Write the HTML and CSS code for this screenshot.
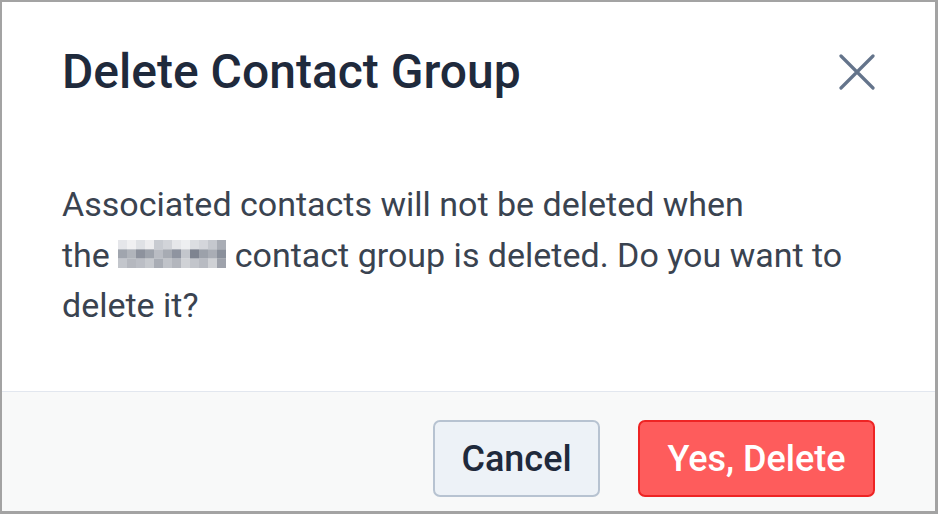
FILE: index.html
```html
<!DOCTYPE html>
<html lang="en">
<head>
<meta charset="utf-8">
<title>Delete Contact Group</title>
<link rel="stylesheet" href="styles.css">
</head>
<body>
<div class="frame">
  <div class="dialog">
    <header class="dialog-header">
      <h1 class="dialog-title">Delete Contact Group</h1>
      <button class="close-btn" aria-label="Close">
        <svg viewBox="0 0 36 36" width="36" height="36" aria-hidden="true">
          <path d="M2 2 L34 34 M34 2 L2 34" stroke="#64748b" stroke-width="3.2" stroke-linecap="round" fill="none"/>
        </svg>
      </button>
    </header>
    <div class="dialog-body">
      <p class="message">Associated contacts will not be deleted when<br>the <svg class="redacted" width="108" height="28" viewBox="0 0 108 28" aria-hidden="true">
        <g>
          <rect x="0" y="0" width="9" height="9.4" fill="#e5e6ea"/>
          <rect x="9" y="0" width="9" height="9.4" fill="#f0f0f2"/>
          <rect x="18" y="0" width="9" height="9.4" fill="#dfe1e5"/>
          <rect x="27" y="0" width="9" height="9.4" fill="#ededef"/>
          <rect x="36" y="0" width="9" height="9.4" fill="#c8cbd1"/>
          <rect x="45" y="0" width="9" height="9.4" fill="#d2d4d9"/>
          <rect x="54" y="0" width="9" height="9.4" fill="#e6e7ea"/>
          <rect x="63" y="0" width="9" height="9.4" fill="#eeeff1"/>
          <rect x="72" y="0" width="9" height="9.4" fill="#dcdee2"/>
          <rect x="81" y="0" width="9" height="9.4" fill="#d4d6db"/>
          <rect x="90" y="0" width="9" height="9.4" fill="#c5c8ce"/>
          <rect x="99" y="0" width="9" height="9.4" fill="#a9adb5"/>
          <rect x="0" y="9.3" width="9" height="9.4" fill="#a0a5ae"/>
          <rect x="9" y="9.3" width="9" height="9.4" fill="#b0b4bb"/>
          <rect x="18" y="9.3" width="9" height="9.4" fill="#8d929d"/>
          <rect x="27" y="9.3" width="9" height="9.4" fill="#9ea3ac"/>
          <rect x="36" y="9.3" width="9" height="9.4" fill="#b9bcc3"/>
          <rect x="45" y="9.3" width="9" height="9.4" fill="#a7abb3"/>
          <rect x="54" y="9.3" width="9" height="9.4" fill="#8f94a0"/>
          <rect x="63" y="9.3" width="9" height="9.4" fill="#c3c6cc"/>
          <rect x="72" y="9.3" width="9" height="9.4" fill="#7e8490"/>
          <rect x="81" y="9.3" width="9" height="9.4" fill="#9ca1aa"/>
          <rect x="90" y="9.3" width="9" height="9.4" fill="#a9adb5"/>
          <rect x="99" y="9.3" width="9" height="9.4" fill="#8a909b"/>
          <rect x="0" y="18.6" width="9" height="9.4" fill="#c3c6cc"/>
          <rect x="9" y="18.6" width="9" height="9.4" fill="#b5b8bf"/>
          <rect x="18" y="18.6" width="9" height="9.4" fill="#bbbec5"/>
          <rect x="27" y="18.6" width="9" height="9.4" fill="#c6c9ce"/>
          <rect x="36" y="18.6" width="9" height="9.4" fill="#a9adb5"/>
          <rect x="45" y="18.6" width="9" height="9.4" fill="#c0c3c9"/>
          <rect x="54" y="18.6" width="9" height="9.4" fill="#b3b6bd"/>
          <rect x="63" y="18.6" width="9" height="9.4" fill="#d0d2d6"/>
          <rect x="72" y="18.6" width="9" height="9.4" fill="#c2c5cb"/>
          <rect x="81" y="18.6" width="9" height="9.4" fill="#b8bbc2"/>
          <rect x="90" y="18.6" width="9" height="9.4" fill="#cfd1d5"/>
          <rect x="99" y="18.6" width="9" height="9.4" fill="#9ea2ab"/>
        </g>
      </svg> contact group is deleted. Do you want to<br>delete it?</p>
    </div>
    <footer class="dialog-footer">
      <button class="btn btn-secondary">Cancel</button>
      <button class="btn btn-danger">Yes, Delete</button>
    </footer>
  </div>
</div>
</body>
</html>
```

FILE: styles.css
```css
* { box-sizing: border-box; }
html, body { margin: 0; padding: 0; background: #ffffff; }
body { font-family: Roboto, "Noto Sans", Arial, sans-serif; }

.frame {
  width: 938px;
  height: 514px;
  border-style: solid;
  border-color: #a3a3a3;
  border-width: 2px 3px 3px 2px;
  background: #ffffff;
}

.dialog {
  height: 100%;
  display: flex;
  flex-direction: column;
}

.dialog-header {
  display: flex;
  align-items: center;
  justify-content: space-between;
  padding: 42px 60px 0 60px;
}

.dialog-title {
  margin: 0;
  font-size: 48px;
  line-height: 56px;
  font-weight: 500;
  color: #1f2a3c;
}

.close-btn {
  border: 0;
  background: transparent;
  padding: 0;
  width: 36px;
  height: 36px;
  display: flex;
  align-items: center;
  justify-content: center;
}

.dialog-body {
  flex: 1;
  padding: 79px 60px 0 60px;
}

.message {
  margin: 0;
  font-size: 34px;
  line-height: 50.5px;
  color: #3a4350;
}

.redacted {
  display: inline-block;
  vertical-align: -1px;
}

.dialog-footer {
  height: 120px;
  border-top: 1px solid #e2e7ef;
  background: #f8f9f9;
  display: flex;
  justify-content: flex-end;
  align-items: flex-start;
  gap: 38px;
  padding: 28px 60px 0 0;
}

.btn {
  height: 77px;
  border-radius: 7px;
  font-family: Roboto, "Noto Sans", Arial, sans-serif;
  font-size: 36px;
  font-weight: 500;
  padding: 0;
  display: flex;
  align-items: center;
  justify-content: center;
}

.btn-secondary {
  width: 167px;
  background: #edf2f7;
  border: 2px solid #b7c3d1;
  color: #1f2a3c;
}

.btn-danger {
  width: 237px;
  background: #fe5c5c;
  border: 2px solid #ee2424;
  color: #ffffff;
}
```
